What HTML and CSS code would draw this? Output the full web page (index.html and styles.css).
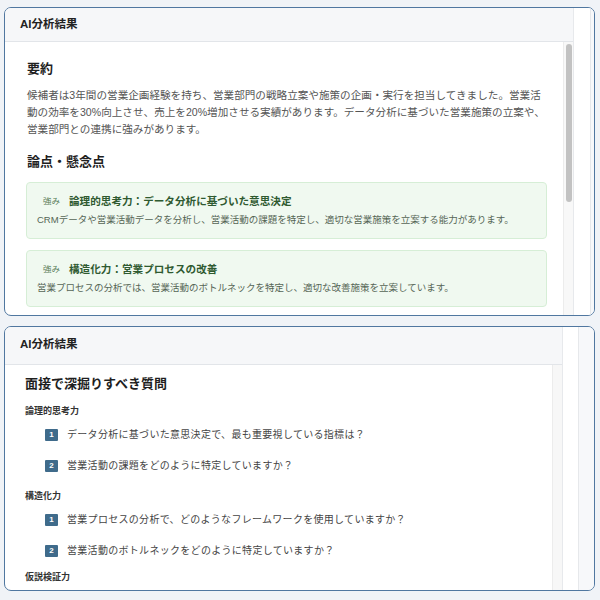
FILE: index.html
```html
<!DOCTYPE html>
<html lang="ja">
<head>
<meta charset="utf-8">
<title>AI分析結果</title>
<link rel="stylesheet" href="styles.css">
</head>
<body>
<div class="page">
  <section class="shot shot-a">
    <div class="card">
      <div class="card-head">AI分析結果</div>
      <div class="card-body">
        <div class="content content-a">
          <h2 class="heading">要約</h2>
          <p class="summary">候補者は3年間の営業企画経験を持ち、営業部門の戦略立案や施策の企画・実行を担当してきました。営業活動の効率を30%向上させ、売上を20%増加させる実績があります。データ分析に基づいた営業施策の立案や、営業部門との連携に強みがあります。</p>
          <h2 class="heading heading-issues">論点・懸念点</h2>
          <div class="point">
            <div class="point-title"><span class="tag">強み</span><span>論理的思考力：データ分析に基づいた意思決定</span></div>
            <p class="point-desc">CRMデータや営業活動データを分析し、営業活動の課題を特定し、適切な営業施策を立案する能力があります。</p>
          </div>
          <div class="point">
            <div class="point-title"><span class="tag">強み</span><span>構造化力：営業プロセスの改善</span></div>
            <p class="point-desc">営業プロセスの分析では、営業活動のボトルネックを特定し、適切な改善施策を立案しています。</p>
          </div>
        </div>
        <div class="scrollbar"><div class="thumb"></div></div>
      </div>
    </div>
    <div class="gutter"></div>
    <div class="edge edge-a"></div>
  </section>

  <section class="shot shot-b">
    <div class="card">
      <div class="card-head card-head-b">AI分析結果</div>
      <div class="card-body">
        <div class="content content-b">
          <h2 class="heading">面接で深掘りすべき質問</h2>
          <h3 class="category">論理的思考力</h3>
          <ol class="questions">
            <li class="question"><span class="num">1</span><span>データ分析に基づいた意思決定で、最も重要視している指標は？</span></li>
            <li class="question"><span class="num">2</span><span>営業活動の課題をどのように特定していますか？</span></li>
          </ol>
          <h3 class="category">構造化力</h3>
          <ol class="questions">
            <li class="question"><span class="num">1</span><span>営業プロセスの分析で、どのようなフレームワークを使用していますか？</span></li>
            <li class="question"><span class="num">2</span><span>営業活動のボトルネックをどのように特定していますか？</span></li>
          </ol>
          <h3 class="category category-last">仮説検証力</h3>
        </div>
        <div class="scrollbar scrollbar-empty"></div>
      </div>
    </div>
    <div class="gutter gutter-b"></div>
    <div class="edge edge-b"></div>
  </section>
</div>
</body>
</html>
```

FILE: styles.css
```css
* { box-sizing: border-box; }

html, body {
  margin: 0;
  padding: 0;
  background: #f0f3f7;
}

body {
  font-family: "Liberation Sans", "Noto Sans CJK JP", sans-serif;
  color: #333;
}

.page {
  display: flex;
  flex-direction: column;
  gap: 10px;
  padding: 7px 5px 0 4px;
}

.shot {
  display: flex;
  border: 1px solid #5077a0;
  border-radius: 7px;
  background: #fff;
  overflow: hidden;
}

.shot-a { height: 309px; }
.shot-b { height: 265px; }

.card {
  display: flex;
  flex-direction: column;
  border-right: 1px solid #e7e9ec;
  min-width: 0;
}

.shot-a .card { width: 569px; }
.shot-b .card { width: 558px; }

.card-head {
  height: 34px;
  flex: none;
  padding: 0 0 2px 15px;
  display: flex;
  align-items: center;
  background: #f6f7f9;
  border-bottom: 1px solid #e2e5e9;
  font-size: 11.5px;
  line-height: 16px;
  font-weight: 700;
  color: #222;
}

.card-head-b { height: 38px; padding-bottom: 4px; }

.card-body {
  flex: 1;
  display: flex;
  min-height: 0;
  overflow: hidden;
}

.content {
  flex: 1;
  min-width: 0;
}

.content-a { padding: 17px 18px 0 22px; }
.content-b { padding: 9px 16px 0 20px; }

.heading {
  margin: 0;
  font-size: 13px;
  line-height: 19px;
  font-weight: 700;
  color: #1f1f1f;
}

.summary {
  margin: 9px 0 0;
  font-size: 10.6px;
  line-height: 17px;
  color: #555;
}

.heading-issues { margin-top: 14px; margin-bottom: 11px; }

.point {
  margin: 0 -2px 11px -1px;
  padding: 9px 10px 10px 10px;
  background: #f0f9f0;
  border: 1px solid #d6eed6;
  border-radius: 4px;
}

.point-title {
  display: flex;
  align-items: center;
  gap: 3px;
  font-size: 10.6px;
  line-height: 18px;
  font-weight: 700;
  color: #2f5a30;
}

.tag {
  padding: 0 6px;
  font-size: 8.5px;
  font-weight: 400;
  color: #5b7f5b;
}

.point-desc {
  margin: 2px 0 0;
  font-size: 9.5px;
  line-height: 16px;
  color: #556555;
}

.scrollbar {
  width: 10px;
  flex: none;
  background: #f8f8f8;
  border-left: 1px solid #ececec;
  padding: 2px 1px 0 2px;
}

.thumb {
  width: 6px;
  height: 158px;
  border-radius: 3px;
  background: #c2c2c2;
}

.scrollbar-empty { background: #f7f7f7; }

.gutter {
  width: 16px;
  flex: none;
  background: #fff;
}

.gutter-b { width: 15px; }

.edge {
  flex: 1;
  background: #f7f8fa;
  border-left: 1px solid #e6e8eb;
}

.category {
  margin: 11px 0 0;
  font-size: 9px;
  line-height: 14px;
  font-weight: 700;
  color: #333;
}

.category + .questions { margin-top: 1px; }
.questions + .category { margin-top: 8px; }
.questions + .category-last { margin-top: 4px; }

.questions {
  list-style: none;
  margin: 0;
  padding: 0 0 0 20px;
}

.question {
  height: 31px;
  display: flex;
  align-items: center;
  gap: 9px;
  font-size: 10px;
  line-height: 15px;
  letter-spacing: 0.3px;
  color: #444;
}

.num {
  width: 13px;
  height: 12px;
  flex: none;
  display: flex;
  align-items: center;
  justify-content: center;
  background: #3f6b8b;
  color: #fff;
  font-size: 8px;
  line-height: 12px;
  font-weight: 700;
  letter-spacing: 0;
  border-radius: 1px;
}
```
